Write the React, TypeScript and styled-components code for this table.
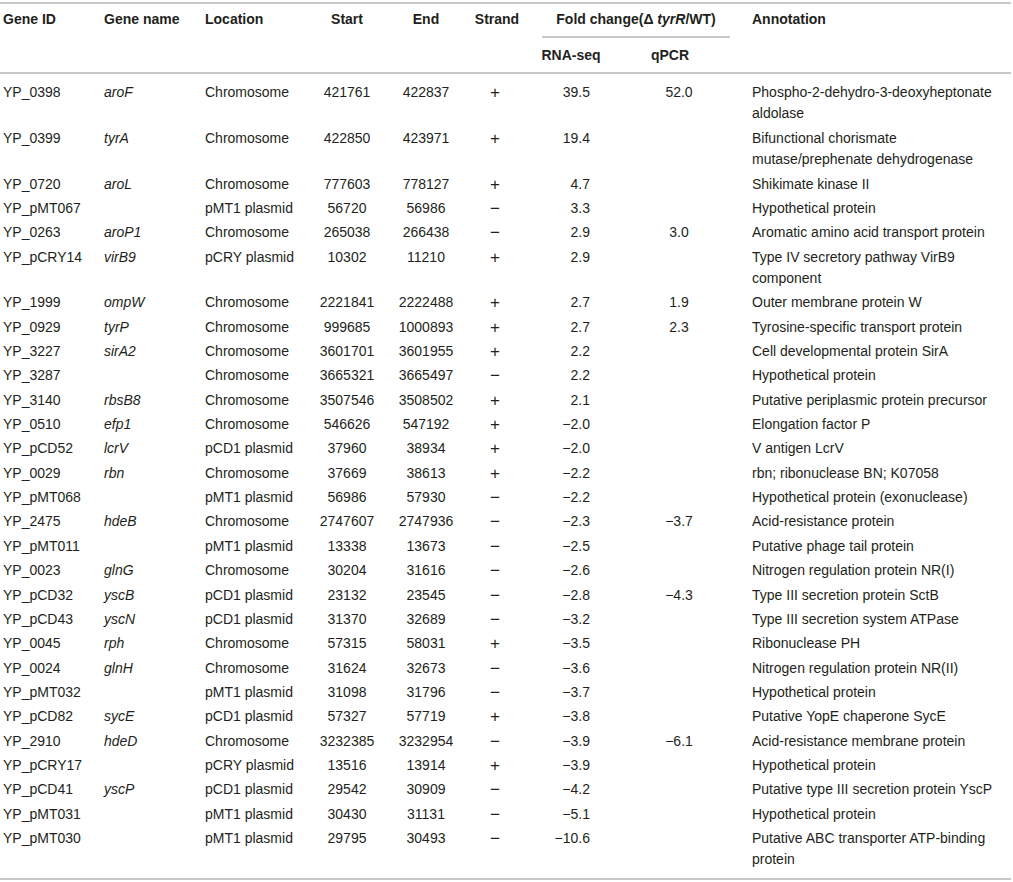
import React from "react";
import styled, { createGlobalStyle } from "styled-components";

const GlobalStyle = createGlobalStyle`
  body {
    margin: 0;
    background: #fff;
    font-family: "Liberation Sans", Arial, sans-serif;
    color: #231f20;
  }
`;

const Wrapper = styled.div`
  width: 1011px;
  margin-top: 2px;
  border-top: 2px solid #c8c8c8;
  border-bottom: 2px solid #c8c8c8;
`;

const Table = styled.table`
  width: 1011px;
  table-layout: fixed;
  border-collapse: collapse;
  font-size: 14px;
`;

type Align = "left" | "center" | "right";

const Th = styled.th<{ $align?: Align; $pl?: number; $pr?: number }>`
  font-weight: 700;
  line-height: 22px;
  vertical-align: top;
  text-align: ${(p) => p.$align || "left"};
  padding: 4px ${(p) => p.$pr || 0}px 0 ${(p) => p.$pl || 0}px;
  white-space: nowrap;
`;

const SubTh = styled(Th)`
  padding-top: 6px;
  padding-bottom: 6px;
  border-bottom: 2px solid #c8c8c8;
`;

const HeadRow = styled.tr`
  th[rowspan] {
    border-bottom: 2px solid #c8c8c8;
  }
`;

const FoldLabel = styled.div`
  margin: 0 17px 0 11px;
  padding-bottom: 6px;
  border-bottom: 2px solid #c8c8c8;
  text-align: center;
`;

const Row = styled.tr`
  &:first-child td {
    padding-top: 8px;
  }
  &:last-child td {
    padding-bottom: 7px;
  }
`;

const Td = styled.td<{ $align?: Align; $pl?: number; $pr?: number }>`
  line-height: 21.44px;
  padding: 1.46px ${(p) => p.$pr || 0}px 1.46px ${(p) => p.$pl || 0}px;
  vertical-align: top;
  text-align: ${(p) => p.$align || "left"};
  white-space: pre-line;
`;

const GeneName = styled(Td)`
  font-style: italic;
`;

const StrandCell = styled(Td)`
  font-size: 17px;
  font-weight: 300;
`;

interface Gene {
  id: string;
  name: string;
  location: string;
  start: string;
  end: string;
  strand: string;
  rnaSeq: string;
  qpcr: string;
  annotation: string;
}

const M = "\u2212";

const rows: Gene[] = [
  ["YP_0398", "aroF", "Chromosome", "421761", "422837", "+", "39.5", "52.0", "Phospho-2-dehydro-3-deoxyheptonate\naldolase"],
  ["YP_0399", "tyrA", "Chromosome", "422850", "423971", "+", "19.4", "", "Bifunctional chorismate\nmutase/prephenate dehydrogenase"],
  ["YP_0720", "aroL", "Chromosome", "777603", "778127", "+", "4.7", "", "Shikimate kinase II"],
  ["YP_pMT067", "", "pMT1 plasmid", "56720", "56986", M, "3.3", "", "Hypothetical protein"],
  ["YP_0263", "aroP1", "Chromosome", "265038", "266438", M, "2.9", "3.0", "Aromatic amino acid transport protein"],
  ["YP_pCRY14", "virB9", "pCRY plasmid", "10302", "11210", "+", "2.9", "", "Type IV secretory pathway VirB9\ncomponent"],
  ["YP_1999", "ompW", "Chromosome", "2221841", "2222488", "+", "2.7", "1.9", "Outer membrane protein W"],
  ["YP_0929", "tyrP", "Chromosome", "999685", "1000893", "+", "2.7", "2.3", "Tyrosine-specific transport protein"],
  ["YP_3227", "sirA2", "Chromosome", "3601701", "3601955", "+", "2.2", "", "Cell developmental protein SirA"],
  ["YP_3287", "", "Chromosome", "3665321", "3665497", M, "2.2", "", "Hypothetical protein"],
  ["YP_3140", "rbsB8", "Chromosome", "3507546", "3508502", "+", "2.1", "", "Putative periplasmic protein precursor"],
  ["YP_0510", "efp1", "Chromosome", "546626", "547192", "+", M + "2.0", "", "Elongation factor P"],
  ["YP_pCD52", "lcrV", "pCD1 plasmid", "37960", "38934", "+", M + "2.0", "", "V antigen LcrV"],
  ["YP_0029", "rbn", "Chromosome", "37669", "38613", "+", M + "2.2", "", "rbn; ribonuclease BN; K07058"],
  ["YP_pMT068", "", "pMT1 plasmid", "56986", "57930", M, M + "2.2", "", "Hypothetical protein (exonuclease)"],
  ["YP_2475", "hdeB", "Chromosome", "2747607", "2747936", M, M + "2.3", M + "3.7", "Acid-resistance protein"],
  ["YP_pMT011", "", "pMT1 plasmid", "13338", "13673", M, M + "2.5", "", "Putative phage tail protein"],
  ["YP_0023", "glnG", "Chromosome", "30204", "31616", M, M + "2.6", "", "Nitrogen regulation protein NR(I)"],
  ["YP_pCD32", "yscB", "pCD1 plasmid", "23132", "23545", M, M + "2.8", M + "4.3", "Type III secretion protein SctB"],
  ["YP_pCD43", "yscN", "pCD1 plasmid", "31370", "32689", M, M + "3.2", "", "Type III secretion system ATPase"],
  ["YP_0045", "rph", "Chromosome", "57315", "58031", "+", M + "3.5", "", "Ribonuclease PH"],
  ["YP_0024", "glnH", "Chromosome", "31624", "32673", M, M + "3.6", "", "Nitrogen regulation protein NR(II)"],
  ["YP_pMT032", "", "pMT1 plasmid", "31098", "31796", M, M + "3.7", "", "Hypothetical protein"],
  ["YP_pCD82", "sycE", "pCD1 plasmid", "57327", "57719", "+", M + "3.8", "", "Putative YopE chaperone SycE"],
  ["YP_2910", "hdeD", "Chromosome", "3232385", "3232954", M, M + "3.9", M + "6.1", "Acid-resistance membrane protein"],
  ["YP_pCRY17", "", "pCRY plasmid", "13516", "13914", "+", M + "3.9", "", "Hypothetical protein"],
  ["YP_pCD41", "yscP", "pCD1 plasmid", "29542", "30909", M, M + "4.2", "", "Putative type III secretion protein YscP"],
  ["YP_pMT031", "", "pMT1 plasmid", "30430", "31131", M, M + "5.1", "", "Hypothetical protein"],
  ["YP_pMT030", "", "pMT1 plasmid", "29795", "30493", M, M + "10.6", "", "Putative ABC transporter ATP-binding\nprotein"],
].map(([id, name, location, start, end, strand, rnaSeq, qpcr, annotation]) => ({
  id,
  name,
  location,
  start,
  end,
  strand,
  rnaSeq,
  qpcr,
  annotation,
}));

const widths = [100, 101, 104, 84, 74, 68, 80, 136, 264];

const App: React.FC = () => (
  <>
    <GlobalStyle />
    <Wrapper>
      <Table>
        <colgroup>
          {widths.map((w, i) => (
            <col key={i} style={{ width: w }} />
          ))}
        </colgroup>
        <thead>
          <HeadRow>
            <Th rowSpan={2} $pl={3}>Gene ID</Th>
            <Th rowSpan={2} $pl={4}>Gene name</Th>
            <Th rowSpan={2} $pl={4}>Location</Th>
            <Th rowSpan={2} $align="center">Start</Th>
            <Th rowSpan={2} $align="center">End</Th>
            <Th rowSpan={2} $align="center">Strand</Th>
            <Th colSpan={2}>
              <FoldLabel>
                Fold change(Δ <i>tyrR</i>/WT)
              </FoldLabel>
            </Th>
            <Th rowSpan={2} $pl={5}>Annotation</Th>
          </HeadRow>
          <tr>
            <SubTh $align="center">RNA-seq</SubTh>
            <SubTh $align="center" $pr={18}>qPCR</SubTh>
          </tr>
        </thead>
        <tbody>
          {rows.map((r) => (
            <Row key={r.id}>
              <Td $pl={3}>{r.id}</Td>
              <GeneName $pl={4}>{r.name}</GeneName>
              <Td $pl={4}>{r.location}</Td>
              <Td $align="center">{r.start}</Td>
              <Td $align="center">{r.end}</Td>
              <StrandCell $align="center" $pr={4}>{r.strand}</StrandCell>
              <Td $align="right" $pr={21}>{r.rnaSeq}</Td>
              <Td $align="center">{r.qpcr}</Td>
              <Td $pl={5}>{r.annotation}</Td>
            </Row>
          ))}
        </tbody>
      </Table>
    </Wrapper>
  </>
);

export default App;
